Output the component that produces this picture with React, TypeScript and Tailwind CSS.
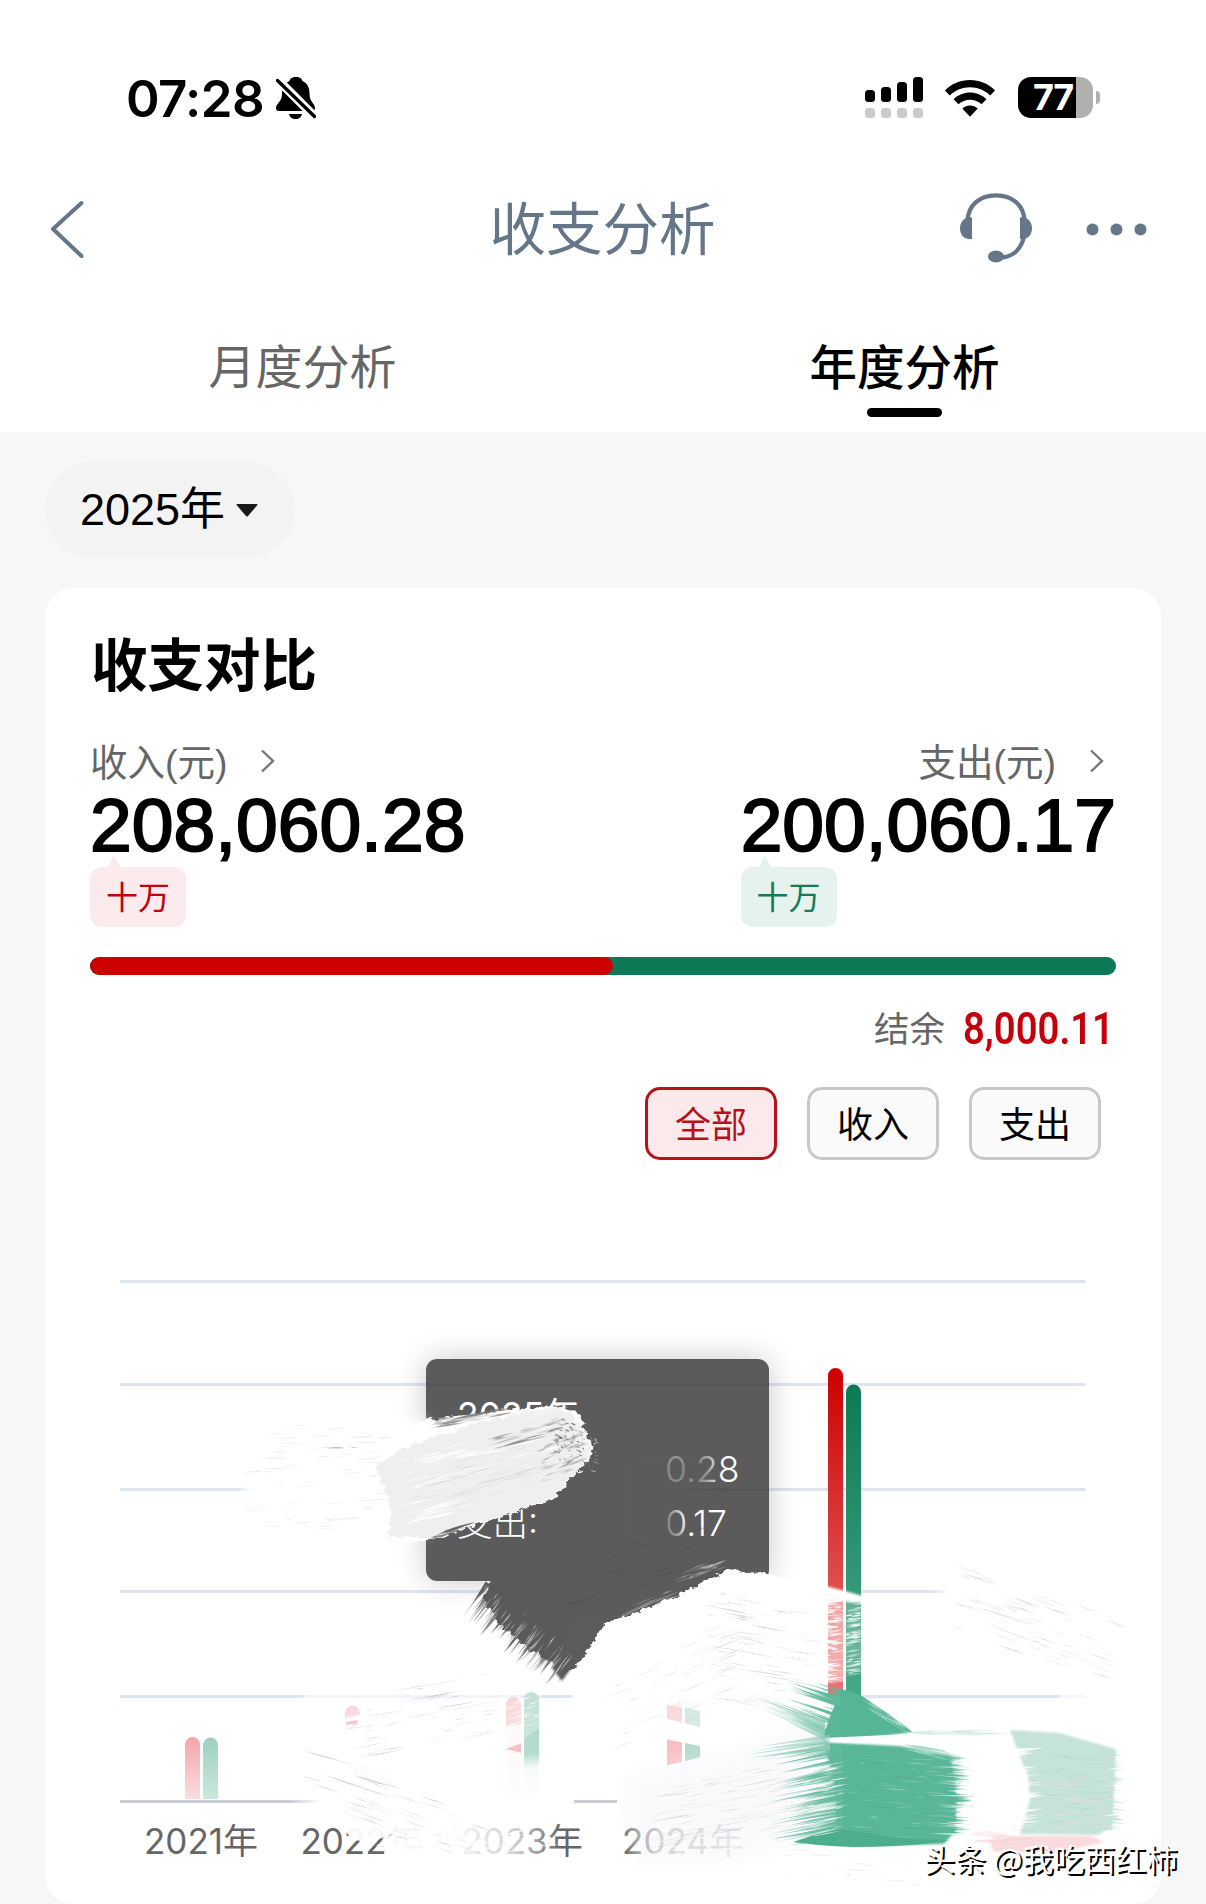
import { ReactElement } from 'react'

type Bar = { year: string; x: number; income: number; expense: number; active?: boolean }

const BASELINE = 1799

const gridLines = [1281.5, 1384.5, 1489.5, 1591.5, 1696.5]

const bars: Bar[] = [
  { year: '2021年', x: 185, income: 1737, expense: 1737.5 },
  { year: '2022年', x: 345, income: 1705.5, expense: 1709 },
  { year: '2023年', x: 506, income: 1697, expense: 1692 },
  { year: '2024年', x: 667, income: 1699, expense: 1701 },
  { year: '2025年', x: 828, income: 1368, expense: 1384.5, active: true },
]

const random = (seed: number) => () => {
  seed = (seed * 16807) % 2147483647
  return seed / 2147483647
}

type BristleProps = {
  x: number
  y: number
  w: number
  h: number
  slope: number
  count: number
  color: string
  seed: number
  align?: 'start' | 'end'
  len?: number
  width?: number
  opacity?: number
}

// Short tapered hair strokes, scattered in a box or growing from one of its sides
const Bristles = ({ x, y, w, h, slope, count, color, seed, align, len = 30, width = 1.5, opacity = 1 }: BristleProps): ReactElement => {
  const next = random(seed * 7919)
  next()
  const items = Array.from({ length: count }, () => {
    const l = len * (0.2 + next() * 0.8)
    const pos = next()
    const sx = align === 'start' ? x : align === 'end' ? x + w - l : x + pos * Math.max(w - l, 1)
    const top = y + next() * h
    const sy = align === 'end' ? top - l * slope : top + (align ? 0 : (sx - x) * slope)
    const t = width * (0.4 + next())
    const lean = slope + (next() - 0.5) * 0.08
    return { sx, sy, l, t, ey: sy + l * lean, o: opacity * (0.3 + next() * 0.7) }
  })
  return (
    <g fill={color}>
      {items.map((b, i) => {
        const mid = (b.sy + b.ey) / 2
        const d =
          align === 'end'
            ? `M${b.sx} ${b.sy}Q${b.sx + b.l / 2} ${mid - b.t / 2} ${b.sx + b.l} ${b.ey - b.t}V${b.ey + b.t}z`
            : align === 'start'
              ? `M${b.sx} ${b.sy - b.t}L${b.sx + b.l} ${b.ey}L${b.sx} ${b.sy + b.t}z`
              : `M${b.sx} ${b.sy}Q${b.sx + b.l / 2} ${mid - b.t} ${b.sx + b.l} ${b.ey}Q${b.sx + b.l / 2} ${mid + b.t} ${b.sx} ${b.sy}z`
        return <path key={i} d={d} opacity={b.o} />
      })}
    </g>
  )
}

const barPath = (x: number, top: number) =>
  `M${x} ${BASELINE}V${top + 7.5}a7.5 7.5 0 0 1 15 0V${BASELINE}z`

const StatusBar = (): ReactElement => (
  <div className="flex h-[152px] items-center justify-between pl-[126px] pr-[106px] pt-[44px]">
    <div className="flex items-center">
      <span className="w-[150px] font-['Inter',sans-serif] text-[51px] font-semibold leading-none tracking-[-0.6px]">07:28</span>
      <svg width="40" height="42" viewBox="0 0 40 42">
        <path d="M20 0c4 0 6 2 6.500 4 5.500 2.500 7 7 7 13 0 8 5.500 9.500 5.500 14 0 2-1 3-3 3H3c-2 0-3-1-3-3 0-4.500 6-6 6-14 0-6 2-10.500 7.500-13C14 2 16 0 20 0z" />
        <path d="M13 37h13c-.5 3-3 5-6.500 5s-6-2-6.500-5z" />
        <path d="M1 2l38 38" stroke="#fff" strokeWidth="9" />
        <path d="M1.500 3.500l37 36" stroke="#000" strokeWidth="3.400" strokeLinecap="round" />
      </svg>
    </div>
    <div className="flex items-center">
      <svg width="58" height="42" viewBox="0 0 58 42">
        <rect x="0" y="13" width="10" height="12" rx="3.500" />
        <rect x="16" y="10" width="10" height="15" rx="3.500" />
        <rect x="32" y="5" width="10" height="20" rx="3.500" />
        <rect x="48" y="0" width="10" height="25" rx="3.500" />
        <g fill="#cbcbcb">
          <rect x="0" y="31" width="10" height="10" rx="3.500" />
          <rect x="16" y="31" width="10" height="10" rx="3.500" />
          <rect x="32" y="31" width="10" height="10" rx="3.500" />
          <rect x="48" y="31" width="10" height="10" rx="3.500" />
        </g>
      </svg>
      <svg className="ml-[22px]" width="50" height="37" viewBox="0 0 50 37">
        <path d="M0 10.500C13-3.500 37-3.500 50 10.500l-4.800 5C34.500 4.500 15.500 4.500 4.800 15.500z" />
        <path d="M8.500 19.300c9.300-9 23.700-9 33 0l-5 5c-6.500-6.200-16.500-6.200-23 0z" />
        <path d="M17.300 28.500c4.300-4 11.100-4 15.400 0L25 36.800z" />
      </svg>
      <div className="mb-[2px] ml-[23px] flex h-[41px] w-[75px] items-center overflow-hidden rounded-[13px] bg-[linear-gradient(to_right,#000_58px,#b0b0b0_58px)] pl-[15px]">
        <span className="font-['Inter',sans-serif] text-[36px] font-bold leading-none tracking-[-1.5px] text-white">77</span>
      </div>
      <div className="mb-[2px] ml-[3px] h-[13px] w-[4px] rounded-r-full bg-[#b0b0b0]" />
    </div>
  </div>
)

const NavBar = (): ReactElement => (
  <div className="flex h-[154px] items-center justify-between pl-[50px] pr-[59px] text-[#647687]">
    <svg width="182" height="58" viewBox="0 0 182 58" fill="none" stroke="currentColor" strokeWidth="4" strokeLinecap="round" strokeLinejoin="round">
      <path d="M31.500 3L3 29l28.500 27" />
    </svg>
    <h1 className="pl-[13px] pt-[4px] text-[56.500px] leading-none font-normal">收支分析</h1>
    <div className="flex items-center">
      <svg className="mb-[2px]" width="72" height="70" viewBox="0 0 72 70" fill="currentColor">
        <path d="M7.500 28C8 12 20 2.300 36 2.300S64 12 64.500 28M64 44c-3 12-11 19.500-22 20.500" fill="none" stroke="currentColor" strokeWidth="4.300" />
        <path d="M12 24.500v21.500c-7 1-12-3.500-12-10.500s5-12 12-11z" />
        <path d="M60 24.500v21.500c7 1 12-3.500 12-10.500s-5-12-12-11z" />
        <ellipse cx="36" cy="63.500" rx="8" ry="6" />
      </svg>
      <svg className="ml-[54px]" width="61" height="13" viewBox="0 0 61 13" fill="currentColor">
        <circle cx="6.500" cy="6.500" r="6" />
        <circle cx="30.500" cy="6.500" r="6" />
        <circle cx="54.500" cy="6.500" r="6" />
      </svg>
    </div>
  </div>
)

const Tabs = (): ReactElement => (
  <div className="grid h-[126px] grid-cols-2 text-[47.500px] leading-[60px]">
    <div className="flex justify-center pl-[2px] pt-[32px] text-[47px] text-[#666]">月度分析</div>
    <div className="flex flex-col items-center pt-[33px] font-medium text-black">
      年度分析
      <div className="mt-[9px] h-[9px] w-[75px] rounded-full bg-black" />
    </div>
  </div>
)

type AmountProps = { label: string; amount: string; tone: 'income' | 'expense' }

const Amount = ({ label, amount, tone }: AmountProps): ReactElement => (
  <div className="flex flex-col">
    <div className={`flex h-[44px] items-center text-[37.500px] text-[#666] ${tone === 'expense' ? 'justify-end pr-[12px]' : ''}`}>
      <span className="pt-[2px] leading-none">{label}</span>
      <svg className="mb-[4px] ml-[33px]" width="15" height="24" viewBox="0 0 15 24" fill="none" stroke="#777" strokeWidth="2.400">
        <path d="M2 1.500L13 12 2 22.500" />
      </svg>
    </div>
    <div className="h-[71px] text-[75px] leading-[81px] text-black [-webkit-text-stroke:2px_black]">{amount}</div>
    <svg className="ml-[18px]" width="12" height="11" viewBox="0 0 12 11" fill={tone === 'income' ? '#fbebed' : '#e6f2ee'}>
      <path d="M0 11L5 1q1-1.500 2 0l5 10z" />
    </svg>
    <div
      className={`flex h-[60px] w-[96px] items-center justify-center rounded-[12px] pt-[2px] text-[32px] leading-none ${
        tone === 'income' ? 'bg-[#fbebed] text-[#c4000d]' : 'bg-[#e6f2ee] text-[#127d58]'
      }`}
    >
      十万
    </div>
  </div>
)

const Chart = (): ReactElement => (
  <svg className="block" width="1116" height="704" viewBox="45 1200 1116 704">
    <defs>
      <linearGradient id="red" x1="0" y1="0" x2="0" y2="1">
        <stop offset="0" stopColor="#cc0000" />
        <stop offset="1" stopColor="#f09a9c" />
      </linearGradient>
      <linearGradient id="green" x1="0" y1="0" x2="0" y2="1">
        <stop offset="0" stopColor="#0d7a55" />
        <stop offset="1" stopColor="#5bb898" />
      </linearGradient>
      <linearGradient id="redSoft" x1="0" y1="0" x2="0" y2="1">
        <stop offset="0" stopColor="#f2a5a9" />
        <stop offset="1" stopColor="#fbdde0" />
      </linearGradient>
      <linearGradient id="greenSoft" x1="0" y1="0" x2="0" y2="1">
        <stop offset="0" stopColor="#9fd0bd" />
        <stop offset="1" stopColor="#c8e8dc" />
      </linearGradient>
    </defs>
    {gridLines.map((y) => (
      <path key={y} d={`M120 ${y}H1085.500`} stroke="#e0e4ed" strokeWidth="2.800" />
    ))}
    <path d="M120 1801.500H1085.500" stroke="#c9cbd4" strokeWidth="2.800" />
    {bars.map((b) => (
      <g key={b.year}>
        <path d={barPath(b.x, b.income)} fill={b.active ? 'url(#red)' : 'url(#redSoft)'} />
        <path d={barPath(b.x + 18, b.expense)} fill={b.active ? 'url(#green)' : 'url(#greenSoft)'} />
        {!b.active && (
          <text x={b.x + 16} y="1854" textAnchor="middle" className="fill-[#666] font-['Inter','Noto_Sans_CJK_SC',sans-serif] text-[35px]">
            {b.year}
          </text>
        )}
      </g>
    ))}
  </svg>
)

const Tooltip = (): ReactElement => (
  <div className="absolute left-[381px] top-[159px] h-[222px] w-[343px] whitespace-nowrap rounded-[11px] bg-[rgba(50,50,50,0.8)] pl-[31px] pt-[30px] font-['Inter','Noto_Sans_CJK_SC',sans-serif] text-[35.500px] font-light leading-[54px] text-white shadow-[0_0_30px_rgba(0,0,0,0.22)]">
    <div className="font-normal">2025年</div>
    <div>收入: 208,060.28</div>
    <div>支出: 200,060.17</div>
  </div>
)

// Paint strokes laid over the chart
const Paint = (): ReactElement => (
  <svg className="absolute left-0 top-0" width="1116" height="704" viewBox="45 1200 1116 704">
    <defs>
      <filter id="rough" x="-20%" y="-20%" width="140%" height="140%" colorInterpolationFilters="sRGB">
        <feTurbulence type="fractalNoise" baseFrequency="0.12 0.2" numOctaves="3" seed="4" />
        <feDisplacementMap in="SourceGraphic" scale="9" xChannelSelector="R" yChannelSelector="G" />
      </filter>
      <filter id="soft" x="-20%" y="-20%" width="140%" height="140%">
        <feGaussianBlur stdDeviation="6" />
      </filter>
      <filter id="edge" x="-10%" y="-10%" width="120%" height="120%">
        <feGaussianBlur stdDeviation="1.2" />
      </filter>
      <linearGradient id="fadeIn" x1="0" y1="0" x2="1" y2="0">
        <stop offset="0" stopColor="#fff" stopOpacity="0" />
        <stop offset="0.120" stopColor="#fff" />
        <stop offset="1" stopColor="#fff" />
      </linearGradient>
      <linearGradient id="clear" x1="0" y1="0" x2="1" y2="0">
        <stop offset="0" stopColor="#fff" stopOpacity="0.950" />
        <stop offset="0.550" stopColor="#fff" stopOpacity="0.700" />
        <stop offset="1" stopColor="#fff" stopOpacity="0" />
      </linearGradient>
      <linearGradient id="cloud" x1="0" y1="0" x2="1" y2="0">
        <stop offset="0" stopColor="#fff" stopOpacity="0" />
        <stop offset="0.300" stopColor="#fff" stopOpacity="0.650" />
        <stop offset="1" stopColor="#fff" stopOpacity="0.850" />
      </linearGradient>
      <linearGradient id="fadeDown" x1="0" y1="0" x2="0" y2="1">
        <stop offset="0" stopColor="#fff" stopOpacity="0" />
        <stop offset="0.300" stopColor="#fff" stopOpacity="0.850" />
        <stop offset="1" stopColor="#fff" />
      </linearGradient>
    </defs>

    {/* dark smear, hides the middle of the two amounts */}
    <path d="M450 1452H662L668 1492H450z" fill="#5b5b5b" />
    <path d="M545 1494L666 1488 668 1548 545 1550z" fill="#5b5b5b" />
    <path d="M625 1450L712 1450 714 1484 676 1500 684 1548 625 1550z" fill="#5b5b5b" opacity="0.720" filter="url(#soft)" />
    <path d="M492 1578L484 1598 500 1625 540 1656 568 1672 580 1660 606 1623 677 1596 728 1569 700 1558 560 1560z" fill="#5b5b5b" filter="url(#rough)" />
    <path d="M500 1560H735L728 1569 677 1594 604 1623 580 1600z" fill="#5b5b5b" />
    <path d="M604 1622L562 1681 552 1668 580 1610z" fill="#5b5b5b" filter="url(#edge)" />
    <g transform="rotate(-52 520 1640)">
      <Bristles x={495} y={1580} w={50} h={116} slope={0} count={170} color="#5b5b5b" seed={12} align="end" len={46} width={2.200} opacity={0.95} />
      <Bristles x={508} y={1580} w={38} h={116} slope={0} count={70} color="#ffffff" seed={77} len={24} width={1} opacity={0.65} />
    </g>
    <Bristles x={560} y={1590} w={150} h={26} slope={-0.35} count={18} color="#4c4c4c" seed={31} len={34} opacity={0.6} />
    <Bristles x={600} y={1540} w={160} h={60} slope={-0.28} count={22} color="#4f4f4f" seed={32} len={34} width={1} opacity={0.6} />
    <Bristles x={615} y={1610} w={70} h={10} slope={-0.38} count={12} color="#ddd" seed={33} len={40} width={1.200} opacity={0.7} />
    <Bristles x={672} y={1576} w={62} h={10} slope={-0.36} count={26} color="#c9c9c9" seed={34} len={24} width={2} opacity={0.6} />

    {/* pale stroke across the left side of the tooltip */}
    <path d="M245 1430L330 1424 426 1419V1535L350 1530 245 1508z" fill="#fff" filter="url(#soft)" />
    <path d="M396 1428L440 1418 516 1409 553 1406 578 1412 586 1430 594 1452 580 1470 554 1498 500 1517 427 1541 392 1540z" fill="#fff" filter="url(#rough)" />
    <path d="M376 1466L400 1450 430 1438 480 1422 553 1408 574 1416 582 1432 592 1453 579 1470 553 1497 500 1516 427 1538 388 1538 392 1510z" fill="#efefef" filter="url(#rough)" />
    <Bristles x={500} y={1414} w={78} h={8} slope={-0.16} count={26} color="#f4f4f4" seed={9} len={50} width={1.400} />
    <Bristles x={395} y={1516} w={90} h={14} slope={-0.28} count={24} color="#ffffff" seed={7} len={50} width={1.600} />
    <Bristles x={390} y={1478} w={185} h={46} slope={-0.28} count={46} color="#d2d2d2" seed={5} len={50} width={1} />
    <Bristles x={385} y={1460} w={190} h={50} slope={-0.25} count={40} color="#ffffff" seed={6} len={50} width={1.800} />
    <Bristles x={482} y={1438} w={92} h={14} slope={-0.26} count={22} color="#777" seed={19} len={34} width={1.800} opacity={0.7} />
    <Bristles x={536} y={1446} w={54} h={40} slope={-0.4} count={40} color="#8a8a8a" seed={23} len={20} width={2} opacity={0.6} />
    <Bristles x={554} y={1415} w={34} h={44} slope={0.4} count={70} color="#5b5b5b" seed={29} len={6} width={1.600} opacity={0.9} />
    <Bristles x={568} y={1430} w={32} h={34} slope={0.3} count={50} color="#ffffff" seed={28} len={6} width={1.200} opacity={0.9} />
    <Bristles x={427} y={1421} w={90} h={9} slope={-0.18} count={24} color="#777" seed={3} len={40} width={1.800} opacity={0.7} />
    <Bristles x={427} y={1536} w={50} h={6} slope={-0.3} count={18} color="#5b5b5b" seed={4} len={34} width={1.800} opacity={0.8} />
    <Bristles x={240} y={1428} w={155} h={105} slope={-0.04} count={60} color="#d8d8d8" seed={41} len={30} width={0.800} opacity={0.8} />
    <Bristles x={320} y={1446} w={45} h={8} slope={0.02} count={5} color="#9a9a9a" seed={42} len={26} width={1} opacity={0.7} />

    {/* white paint, lower area */}
    <path d="M606 1624L677 1596 712 1577 730 1569 780 1576 771 1615 600 1670 568 1686z" fill="#fff" filter="url(#rough)" />
    <path d="M735 1573L771 1577 800 1580 824 1586V1700L640 1700 578 1690 610 1628 680 1602z" fill="#fff" />
    <path d="M822 1585L845 1591 866 1597V1603L845 1601 822 1600z" fill="#fff" filter="url(#edge)" />
    <rect x="824" y="1594" width="21" height="88" fill="#fff" opacity="0.450" />
    <rect x="845" y="1600" width="18" height="72" fill="#fff" opacity="0.220" />
    <Bristles x={822} y={1596} w={24} h={86} slope={-0.1} count={44} color="#ffffff" seed={8} len={26} width={1.900} />
    <Bristles x={822} y={1596} w={20} h={86} slope={0.1} count={30} color="#ffffff" seed={18} align="start" len={22} width={1.900} />
    <Bristles x={843} y={1600} w={24} h={76} slope={-0.15} count={60} color="#ffffff" seed={84} len={22} width={1.700} />
    <path d="M310 1690H505V1703H420L376 1703 362 1716 343 1720 335 1730H250L300 1700z" fill="url(#fadeIn)" opacity="0.600" />
    <path d="M343 1719L362 1714 380 1706V1800L343 1800z" fill="#fff" />
    <path d="M361 1705H381V1735H361z" fill="#fff" opacity="0.780" />
    <path d="M361 1730H381V1800H361z" fill="#fff" />
    <path d="M346 1722L358 1720 357 1724 346 1725z" fill="#f6c9cc" />
    <path d="M502 1690H522V1727L502 1731z" fill="#fff" opacity="0.550" />
    <path d="M502 1728L522 1724V1743L506 1749 522 1753V1800H502z" fill="#fff" opacity="0.900" />
    <path d="M523 1690H541V1727L523 1739z" fill="#fff" opacity="0.350" />
    <Bristles x={502} y={1704} w={40} h={32} slope={-0.3} count={24} color="#ffffff" seed={14} len={26} width={1.800} opacity={0.8} />
    <path d="M523 1754H541V1800H523z" fill="url(#fadeDown)" />
    <path d="M288 1795H574V1808H288z" fill="url(#fadeIn)" />
    <path d="M617 1797H1090V1808H617z" fill="#fff" />
    <path d="M572 1690H824V1702H572z" fill="#fff" />
    <path d="M660 1697H704V1712L683 1707 660 1705z" fill="#fff" opacity="0.850" />
    <path d="M660 1697H704V1729L683 1724 660 1718z" fill="#fff" opacity="0.550" />
    <path d="M660 1717L683 1723 704 1728 704 1747 685 1743 664 1739z" fill="#fff" />
    <path d="M660 1767L682 1762 704 1756V1802H660z" fill="#fff" />

    {/* smudged axis labels */}
    <path d="M338 1820H420V1864H408L404 1856 388 1850 376 1846 392 1834 372 1842 352 1840z" fill="#fff" opacity="0.950" />
    <path d="M385 1846L404 1842 415 1864 388 1850z" fill="#fff" opacity="0.800" />
    <path d="M455 1820H562V1864H455z" fill="url(#clear)" />
    <Bristles x={460} y={1838} w={100} h={26} slope={-0.12} count={26} color="#ffffff" seed={15} len={30} width={1.600} />
    <path d="M622 1820H750V1864H622z" fill="url(#cloud)" />
    <Bristles x={650} y={1840} w={100} h={24} slope={-0.18} count={22} color="#ffffff" seed={16} len={34} width={1.600} />

    <path d="M627 1774L720 1752 832 1716 842 1830 740 1862 640 1866 620 1810z" fill="#f1f1f8" opacity="0.300" filter="url(#soft)" />
    <Bristles x={340} y={1700} w={165} h={62} slope={-0.18} count={50} color="#bcbcbc" seed={51} len={50} width={0.700} opacity={0.8} />
    <Bristles x={300} y={1745} w={200} h={60} slope={0.34} count={56} color="#bcbcbc" seed={53} len={44} width={0.800} opacity={0.75} />
    <Bristles x={600} y={1670} w={150} h={90} slope={-0.4} count={46} color="#c8c8c8" seed={55} len={36} width={0.700} opacity={0.8} />
    <Bristles x={700} y={1590} w={125} h={110} slope={0.16} count={80} color="#c0c0c0" seed={57} len={40} width={0.700} opacity={0.8} />
    <Bristles x={640} y={1790} w={190} h={66} slope={-0.2} count={64} color="#c4c4cc" seed={59} len={50} width={0.700} opacity={0.8} />
    <Bristles x={950} y={1560} w={180} h={70} slope={0.35} count={80} color="#bdbdbd" seed={61} len={36} width={0.700} opacity={0.8} />
    <Bristles x={780} y={1848} w={150} h={32} slope={0.05} count={16} color="#ccc" seed={63} len={30} width={0.700} opacity={0.7} />
    <path d="M930 1586H1090V1597H930z" fill="url(#fadeIn)" />
    <path d="M1060 1691H1090V1701H1060z" fill="#fff" opacity="0.700" />

    {/* green and pink daubs */}
    <rect x="822" y="1698" width="44" height="106" fill="#fff" />
    <path d="M839 1688L862 1696 890 1715 914 1733 890 1735 823 1738 830 1717 836 1702z" fill="#56b596" />
    <Bristles x={760} y={1690} w={80} h={46} slope={0.34} count={50} color="#5fb99b" seed={71} align="end" len={56} width={1.300} />
    <Bristles x={730} y={1722} w={95} h={16} slope={0.42} count={26} color="#8ccdb8" seed={73} align="end" len={76} width={1.400} opacity={0.7} />
    <Bristles x={862} y={1694} w={50} h={10} slope={0.68} count={26} color="#ffffff" seed={74} len={30} width={0.800} opacity={0.8} />
    <path d="M824 1742L900 1746 950 1755 956 1790 956 1830 944 1844 853 1846 812 1843 836 1831 836 1790z" fill="#5ab698" filter="url(#edge)" />
    <Bristles x={760} y={1744} w={82} h={92} slope={-0.2} count={120} color="#62ba9d" seed={79} align="end" len={72} width={1.500} opacity={0.9} />
    <Bristles x={740} y={1738} w={90} h={14} slope={-0.12} count={20} color="#8ccdb8" seed={80} align="end" len={86} width={1.600} opacity={0.7} />
    <Bristles x={945} y={1757} w={40} h={80} slope={0.04} count={110} color="#5ab698" seed={82} align="start" len={30} width={1.800} />
    <path d="M793 1842Q815 1834 838 1829L900 1838 948 1840Q930 1846 853 1847 820 1846 793 1842z" fill="#4cae8c" />
    <Bristles x={845} y={1752} w={115} h={86} slope={0.05} count={40} color="#8fd0ba" seed={81} len={34} width={1.200} opacity={0.9} />
    <Bristles x={925} y={1762} w={46} h={80} slope={0.03} count={36} color="#ffffff" seed={83} align="end" len={44} width={1.100} opacity={0.9} />
    <Bristles x={800} y={1770} w={50} h={70} slope={-0.2} count={46} color="#ffffff" seed={86} len={34} width={1.300} />
    <Bristles x={850} y={1756} w={90} h={82} slope={0.04} count={18} color="#3fa27f" seed={85} len={34} width={0.700} opacity={0.7} />
    <path d="M826 1739Q880 1738 912 1732T1008 1730L1020 1756 963 1757 905 1744 830 1742z" fill="#fff" filter="url(#edge)" />
    <Bristles x={905} y={1731} w={110} h={4} slope={-0.02} count={16} color="#cfe8df" seed={87} len={60} width={1.600} />
    <Bristles x={900} y={1742} w={66} h={8} slope={0.2} count={20} color="#a8dac9" seed={88} len={50} width={1.400} />
    <path d="M1010 1730L1060 1733 1116 1749 1114 1790 1112 1826 1098 1835 1020 1834 1030 1800 1028 1776 1018 1752z" fill="#c6e3d9" filter="url(#edge)" />
    <Bristles x={1104} y={1752} w={34} h={78} slope={0.08} count={70} color="#c6e3d9" seed={96} align="start" len={24} width={1.800} />
    <Bristles x={1035} y={1745} w={85} h={84} slope={0.04} count={40} color="#b5dacd" seed={91} len={34} width={1.200} opacity={0.8} />
    <Bristles x={1040} y={1776} w={85} h={52} slope={0.03} count={24} color="#ecd9dc" seed={93} len={34} width={1.800} opacity={0.9} />
    <Bristles x={1095} y={1750} w={34} h={84} slope={-0.1} count={22} color="#ffffff" seed={98} align="end" len={30} width={1.200} />
    <Bristles x={1010} y={1745} w={46} h={88} slope={-0.1} count={70} color="#ffffff" seed={97} align="start" len={38} width={1.800} />
    <path d="M990 1842L1010 1836 1092 1836 1104 1842 1060 1852 994 1852z" fill="#f9dadd" filter="url(#edge)" />
    <Bristles x={970} y={1832} w={70} h={12} slope={-0.05} count={16} color="#f6cfd3" seed={99} len={40} width={1.600} opacity={0.7} />
  </svg>
)

const filters = [
  { name: '全部', active: true },
  { name: '收入', active: false },
  { name: '支出', active: false },
]

const App = (): ReactElement => (
  <div className="relative h-[1904px] w-[1206px] overflow-hidden bg-white font-['Liberation_Sans','Noto_Sans_CJK_SC',sans-serif] text-black">
    <StatusBar />
    <NavBar />
    <Tabs />
    <main className="h-[1472px] bg-[#f7f7f7] px-[45px] pt-[30px]">
      <button type="button" className="flex h-[96px] w-[250px] items-center rounded-full bg-[#f3f3f3] pl-[35px] text-[45px] leading-none">
        <span className="mb-[2px]">2025年</span>
        <svg className="ml-[11px]" width="22" height="13" viewBox="0 0 22 13" fill="#1a1a1a">
          <path d="M1 0h20q1 .5 0 1.500L12 12q-1 1-2 0L1 1.500Q0 .5 1 0z" />
        </svg>
      </button>
      <section className="mt-[30px] h-[1316px] rounded-[28px] bg-white pt-[45px]">
        <div className="h-[567px] px-[45px]">
          <h2 className="pl-px text-[56.500px] font-bold leading-[68px]">收支对比</h2>
          <div className="mt-[40px] flex justify-between">
            <Amount label="收入(元)" amount="208,060.28" tone="income" />
            <Amount label="支出(元)" amount="200,060.17" tone="expense" />
          </div>
          <div className="mt-[30px] h-[18px] overflow-hidden rounded-full bg-[#0d7a55]">
            <div className="h-full w-[523px] rounded-full bg-[#cc0000]" />
          </div>
          <div className="mt-[30px] flex h-[48px] items-center justify-end">
            <span className="pt-[3px] text-[35.500px] leading-none text-[#666]">结余</span>
            <span className="mb-[2px] ml-[18px] w-[153px] origin-left scale-x-[0.85] font-['Roboto',sans-serif] text-[45px] font-semibold leading-none text-[#c4000d]">8,000.11</span>
          </div>
          <div className="mt-[34px] flex justify-end gap-[30px] pr-[15px]">
            {filters.map((f) => (
              <button
                key={f.name}
                type="button"
                className={`flex h-[73px] w-[132px] items-center justify-center rounded-[15px] border-[3px] pt-[4px] text-[36px] leading-none ${
                  f.active ? 'border-[#b5121b] bg-[#fbe9eb] text-[#b5121b]' : 'border-[#c8c8c8] bg-[#fafafa] text-black'
                }`}
              >
                {f.name}
              </button>
            ))}
          </div>
        </div>
        <div className="relative">
          <Chart />
          <Tooltip />
          <Paint />
        </div>
      </section>
    </main>
    <div className="absolute left-[924px] top-[1840px] whitespace-nowrap font-['Noto_Sans_CJK_SC',sans-serif] text-[31px] leading-[36px] text-white [text-shadow:2px_2px_0_#000]">
      头条 @我吃西红柿
    </div>
  </div>
)
export default App
